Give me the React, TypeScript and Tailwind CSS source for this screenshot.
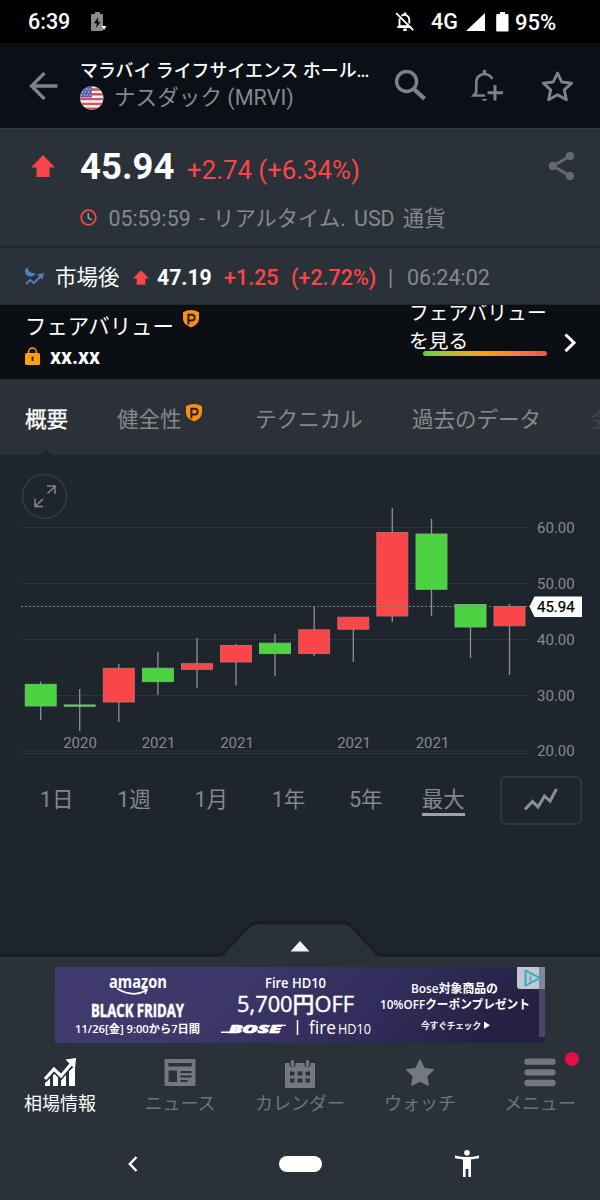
import type { ReactNode } from "react";
import { clsx } from "clsx";

type Candle = {
  x: number;
  open: number;
  close: number;
  high: number;
  low: number;
  up?: boolean;
};

// y values are pixels inside the chart, top to bottom
const candles: Candle[] = [
  { x: 40.7, open: 229.3, close: 251, high: 226.5, low: 265, up: true },
  { x: 79.7, open: 249.9, close: 251.3, high: 234, low: 276, up: true },
  { x: 118.8, open: 213.3, close: 247, high: 209, low: 267 },
  { x: 157.9, open: 213.2, close: 226.7, high: 197, low: 240, up: true },
  { x: 197, open: 208.7, close: 214.3, high: 183, low: 233 },
  { x: 236, open: 190.5, close: 207, high: 189, low: 230.5 },
  { x: 275, open: 188.2, close: 198.6, high: 179, low: 221, up: true },
  { x: 314.2, open: 174.8, close: 198.5, high: 152, low: 201 },
  { x: 353.3, open: 162.2, close: 174.2, high: 162, low: 207 },
  { x: 392.3, open: 77.5, close: 161, high: 53, low: 167 },
  { x: 431.5, open: 79, close: 134.3, high: 64, low: 161, up: true },
  { x: 470.5, open: 149.5, close: 172, high: 149, low: 203, up: true },
  { x: 509.5, open: 151.5, close: 170.8, high: 149, low: 220 },
];

const priceLines = [
  { y: 72.5, label: "60.00" },
  { y: 128.5, label: "50.00" },
  { y: 184.5, label: "40.00" },
  { y: 240.5, label: "30.00" },
  { y: 296, label: "20.00" },
];

const years = [
  { x: 80, label: "2020" },
  { x: 158.5, label: "2021" },
  { x: 237, label: "2021" },
  { x: 354, label: "2021" },
  { x: 432.5, label: "2021" },
];

const ranges = ["1日", "1週", "1月", "1年", "5年", "最大"];

function UpArrow({ className }: { className?: string }) {
  return (
    <svg viewBox="0 0 24 22" className={className} fill="#fa4648">
      <path d="M12 0 24 12.5H18.5V22H5.5V12.5H0Z" />
    </svg>
  );
}

function ProBadge({ className }: { className?: string }) {
  return (
    <svg viewBox="0 0 16 18" className={className}>
      <path d="M0 2.2Q8-2.2 16 2.2V9Q15.5 14.5 8 17.5L4.5 15.6Q.5 13.500 0 9Z" fill="#ff8f0c" />
      <path d="M5.4 14.500V4.7H8.8a2.9 2.9 0 0 1 0 5.800H5.4" fill="none" stroke="#1f252c" strokeWidth="2" />
    </svg>
  );
}

function StatusBar() {
  return (
    <div className="flex h-[43px] items-center bg-black pl-7 text-[21.5px] font-medium text-white">
      <span className="w-[63px] pt-0.5">6:39</span>
      <svg width="16" height="20" viewBox="0 0 16 20">
        <path d="M4 2V0h5v2h2a1 1 0 0 1 1 1v15a1 1 0 0 1-1 1H1a1 1 0 0 1-1-1V3a1 1 0 0 1 1-1Z" fill="#8b8b8b" />
        <path d="M7.2 5 3 11.3h2.8L5.2 16l4.3-6.3H6.6Z" fill="#000" />
        <path d="M10.5 14h5L13 18Z" fill="#fff" />
      </svg>
      <svg width="20" height="20" viewBox="0 0 20 20" className="ml-[288px]" fill="none" stroke="#fff" strokeWidth="1.9">
        <path d="M4.5 6.5v7.7h10M2.3 15h14M6.5 3.7A5 5 0 0 1 14.3 8v3.5M1.2 1.2l17 17" />
        <path d="M10 .5v2.6M8.3 17.8h3.4" strokeWidth="2.4" />
      </svg>
      <span className="ml-4 w-[35px] pt-0.5">4G</span>
      <svg width="19" height="18" viewBox="0 0 19 18" fill="#fff">
        <path d="M0 18 19 0V18Z" />
      </svg>
      <svg width="13" height="20" viewBox="0 0 13 20" className="ml-[11px]" fill="#fff">
        <path d="M4 2V0h5v2h2.500a1 1 0 0 1 1 1v15.500a1 1 0 0 1-1 1H1.200a1 1 0 0 1-1-1V3a1 1 0 0 1 1-1Z" />
      </svg>
      <span className="ml-1.5 pt-0.5 text-[22px]">95%</span>
    </div>
  );
}

function Flag() {
  return (
    <svg width="24" height="24" viewBox="0 0 24 24" className="-mr-px">
      <defs>
        <clipPath id="flag">
          <circle cx="11.700" cy="12" r="11.700" />
        </clipPath>
      </defs>
      <g clipPath="url(#flag)">
        <path d="M0 0h24v24H0Z" fill="#f4f1f3" />
        <path d="M0 3.500h24M0 8.300h24M0 13.100h24M0 17.900h24M0 22.700h24" stroke="#d5505f" strokeWidth="2.400" />
        <path d="M0 0h12v11.500H0Z" fill="#5a61a8" />
        <path d="M3 3h9M2 6h10M1 9h11" stroke="#d7d9ef" strokeWidth="1.200" strokeDasharray="1.300 1.700" />
      </g>
    </svg>
  );
}

function Header() {
  return (
    <header className="flex h-[85px] bg-[#0b0f16] pl-[29px]">
      <svg width="29" height="28" viewBox="0 0 29 28" className="mt-[29px] shrink-0" fill="none" stroke="#7d8188" strokeWidth="3.400">
        <path d="M28.500 14H3M15.500 1 2.500 14l13 13" />
      </svg>
      <div className="ml-[22px] w-[300px] shrink-0 whitespace-nowrap">
        <h1 className="mt-[15px] h-[25px] text-[17.900px] leading-[25px] font-medium text-white">
          マラバイ ライフサイエンス ホール<span className="tracking-[-1px]">...</span>
        </h1>
        <div className="flex items-center gap-2.5 text-[21.600px] leading-[30px] text-[#85888c]">
          <Flag />
          <span className="ml-px">ナスダック (MRVI)</span>
        </div>
      </div>
      <svg width="32" height="32" viewBox="0 0 32 32" className="mt-[26px] ml-[14px] shrink-0" fill="none" stroke="#7d8188">
        <circle cx="12.600" cy="12.500" r="10" strokeWidth="3.400" />
        <path d="M19.500 19.500 22 22" strokeWidth="3" />
        <path d="m21 21 9.500 8.800" strokeWidth="4.400" />
      </svg>
      <svg width="32" height="32" viewBox="0 0 32 32" className="mt-[27px] ml-[45px] shrink-0" fill="none" stroke="#7d8188" strokeWidth="2.600">
        <path d="M14 25.500H2.500L5.300 22.200V13Q5.300 4.500 13.500 4Q19 4.200 21.300 9" />
        <path d="M13.500 0v4" strokeWidth="3.400" />
        <path d="M10.500 29h6Q13.500 33 10.500 29Z" fill="#7d8188" stroke="none" />
        <path d="M24 15v15.500M16.500 22.800H32" strokeWidth="3" />
      </svg>
      <svg width="34" height="34" viewBox="0 0 34 34" className="mt-[26px] ml-[37px] shrink-0" fill="none" stroke="#7d8188" strokeWidth="2.900">
        <path d="m17.500 4 4.200 9 10 1.100-7.400 6.800 2.100 9.800-8.900-4.900-8.900 4.900 2.100-9.800-7.400-6.800 10-1.100Z" strokeLinejoin="round" />
      </svg>
    </header>
  );
}

function Quote() {
  return (
    <section className="h-[120px] border-t border-b-2 border-t-[#363a42] border-b-[#22282e] bg-[#2b3138]">
      <div className="flex h-[66px] items-center pl-[31px]">
        <UpArrow className="mt-2 h-[22px] w-6" />
        <span className="ml-[25px] w-[107px] pt-2.5 text-[36.500px] leading-none font-bold text-white">45.94</span>
        <span className="pt-[18px] text-[25.800px] leading-none whitespace-nowrap text-[#fa4648]">+2.74 (+6.34%)</span>
        <svg width="27" height="30" viewBox="0 0 27 30" className="mt-[7px] ml-auto mr-[25px]" fill="#656a71" stroke="#656a71">
          <path d="M22 5 5 15 22 25" fill="none" strokeWidth="2.800" />
          <circle cx="22" cy="5" r="3.800" />
          <circle cx="4.800" cy="15" r="3.800" />
          <circle cx="22" cy="25" r="3.800" />
        </svg>
      </div>
      <div className="flex h-[46px] items-center pl-[79.500px] text-[21.300px] whitespace-nowrap text-[#85888c]">
        <svg width="17" height="17" viewBox="0 0 17 17" fill="none" className="-mt-0.5">
          <circle cx="8.500" cy="8.500" r="7.300" stroke="#ef4a50" strokeWidth="1.700" />
          <path d="M8.300 4v5l3.500 1.800" stroke="#a09ca1" strokeWidth="1.500" />
        </svg>
        <span className="ml-3 pt-px [word-spacing:3px]">05:59:59 - リアルタイム. USD 通貨</span>
      </div>
    </section>
  );
}

function AfterHours() {
  return (
    <section className="flex h-[57px] items-center border-b border-[#20262b] bg-[#2b3138] pt-1 pl-6 text-[21.500px] whitespace-nowrap">
      <svg width="21" height="19" viewBox="0 0 21 19" fill="none" stroke="#4f81c2" className="-mt-1">
        <path d="M3.500 0Q4 7 11.500 6Q10 10 5.500 9.500Q.5 8 1 3Z" fill="#4f81c2" stroke="none" />
        <path d="m2 17 4-4 4 3 8-8" strokeWidth="2" />
        <path d="M13 7.500 20 6l-1.500 6.500Z" fill="#4f81c2" stroke="none" />
      </svg>
      <span className="ml-2.5 w-[78px] text-white">市場後</span>
      <UpArrow className="-mt-0.5 h-[15px] w-4" />
      <span className="ml-2 w-[67px] text-[21.200px] font-bold text-white">47.19</span>
      <span className="w-[67px] font-medium text-[#fa4648]">+1.25</span>
      <span className="w-[97px] font-medium text-[#fa4648]">(+2.72%)</span>
      <span className="w-[19px] text-[#85888c]">|</span>
      <span className="text-[#85888c]">06:24:02</span>
    </section>
  );
}

function FairValue() {
  return (
    <section className="flex h-[74px] overflow-hidden bg-[#0b0f13] text-white">
      <div className="w-[409px] shrink-0 pl-[25px] whitespace-nowrap">
        <div className="flex h-9">
          <span className="pt-[7px] text-[21.400px] leading-[30px]">フェアバリュー</span>
          <ProBadge className="mt-[5px] ml-[9px] h-[18px] w-4" />
        </div>
        <div className="-mt-0.5 flex items-center">
          <svg width="15" height="18" viewBox="0 0 15 18">
            <path d="M3.600 7V5a3.900 3.900 0 0 1 7.800 0v2" fill="none" stroke="#ffa00c" strokeWidth="1.500" />
            <rect y="6" width="15" height="12" rx="1.500" fill="#ffa00c" />
            <path d="M7.500 9.500V14" stroke="#33270b" strokeWidth="2" />
          </svg>
          <span className="ml-2.5 pt-[3px] text-[21.500px] leading-[30px] font-bold">xx.xx</span>
        </div>
      </div>
      <div className="w-[152px] shrink-0">
        <p className="-mt-[5px] h-[51px] w-[142px] text-[19.800px] leading-7">フェアバリューを見る</p>
        <div className="relative ml-3.5 h-[5px] w-[124px] rounded-full bg-linear-to-r from-[#4bd440] via-[#ffa00c] to-[#f4504a]" />
      </div>
      <svg width="13" height="20" viewBox="0 0 13 20" className="mt-7 ml-[3px]" fill="none" stroke="#fff" strokeWidth="3">
        <path d="m1.500 1.500 8.500 8.300-8.500 8.300" />
      </svg>
    </section>
  );
}

function Tabs() {
  return (
    <nav className="flex h-[76px] items-center overflow-hidden bg-[#2c3138] pl-[25px] text-[21.500px] whitespace-nowrap text-[#85888c]">
      <div className="relative flex h-full w-[92px] shrink-0 items-center pt-[7px] text-white [-webkit-text-stroke:0.3px_#fff]">
        概要
        <div className="absolute bottom-0 left-[15px] h-1.5 w-3 bg-[#1f252c] [clip-path:polygon(50%_0,100%_100%,0_100%)]" />
      </div>
      <div className="flex w-[138px] shrink-0 items-start pt-[7px]">
        健全性
        <ProBadge className="ml-1 h-[18px] w-4" />
      </div>
      <span className="w-[157px] shrink-0 pt-[7px]">テクニカル</span>
      <span className="w-[179px] shrink-0 pt-[7px]">過去のデータ</span>
      <span className="pt-[7px] text-[#41464d]">会</span>
    </nav>
  );
}

function Chart() {
  return (
    <svg width="600" height="305" viewBox="0 0 600 305" className="block" fontSize="15">
      <g fill="none" stroke="#353b42" strokeWidth="1.500">
        <circle cx="44.500" cy="41.500" r="22" />
        <path d="m47.500 38.500 7.500-7M47 31h8v8M43 44l-7.500 7M35 43.500v8h8" stroke="#85888c" />
      </g>
      {priceLines.map((line) => (
        <g key={line.label}>
          <path d={`M21 ${line.y}H530`} stroke="#2e343b" strokeWidth="1.200" />
          <text x="537" y={line.y + 5} fill="#85888c">
            {line.label}
          </text>
        </g>
      ))}
      <path d="M21 298.500H530" stroke="#2e343b" />
      {candles.map((c) => (
        <g key={c.x} stroke="#8b9195">
          <path d={`M${c.x} ${c.high}V${c.low}`} strokeWidth="1.300" />
          <rect
            x={c.x - 15.5}
            y={c.open}
            width="31"
            height={c.close - c.open}
            fill={c.up ? "#4bd440" : "#fa4648"}
            stroke={c.up ? "#6fbf70" : "#d0696c"}
            strokeWidth="0.900"
          />
        </g>
      ))}
      <path d="M21 151.500H530" stroke="#85888c" strokeDasharray="2 2" strokeWidth="0.900" />
      {years.map((year) => (
        <text key={year.x} x={year.x} y="293" textAnchor="middle" fill="#85888c">
          {year.label}
        </text>
      ))}
      <path d="m529.500 151.500 5-10H582v20.500h-47.500Z" fill="#fff" />
      <text x="537" y="157" fill="#000" stroke="#000" strokeWidth="0.250">
        45.94
      </text>
    </svg>
  );
}

function RangePicker() {
  return (
    <div className="flex h-[66px] items-center pl-[18px] text-[21.500px] text-[#85888c]">
      {ranges.map((range) => (
        <div key={range} className="flex w-[77.300px] justify-center pb-0.5">
          <span
            className={clsx(
              "flex h-[34px] items-center border-b-[3px] pt-1.5",
              range === "最大" ? "border-[#a0a2a5]" : "border-transparent",
            )}
          >
            {range}
          </span>
        </div>
      ))}
      <button className="ml-[18px] flex h-[49px] w-[82px] items-center justify-center rounded-md border-2 border-[#2f353c]">
        <svg width="34" height="24" viewBox="0 0 34 24" fill="none" stroke="#8c8f93" strokeWidth="3">
          <path d="m1 21.500 7.500-8 5.500 5.500 6.500-11 5.500 5 6.500-12" />
        </svg>
      </button>
    </div>
  );
}

function AdBanner() {
  return (
    <svg width="490" height="76" viewBox="0 0 490 76" className="mx-auto block" fill="#fff" fontFamily="'Open Sans','Noto Sans CJK JP',sans-serif">
      <defs>
        <linearGradient id="ad" x2="1" y2="0.150">
          <stop stopColor="#413a6e" />
          <stop offset="0.400" stopColor="#3d376a" />
          <stop offset="0.750" stopColor="#302b58" />
          <stop offset="1" stopColor="#252143" />
        </linearGradient>
      </defs>
      <rect width="490" height="76" fill="url(#ad)" />
      <text x="54" y="21" fontSize="18" fontWeight="700" textLength="58" lengthAdjust="spacingAndGlyphs">amazon</text>
      <path d="M62 21.500Q78 31 91 23.500M86.500 21.500l5.500 1-2 4.500" fill="none" stroke="#fff" strokeWidth="1.700" />
      <text x="36" y="50.300" fontSize="18" fontWeight="700" stroke="#fff" strokeWidth="0.500" textLength="93" lengthAdjust="spacingAndGlyphs">BLACK FRIDAY</text>
      <text x="20" y="66" fontSize="11" fontWeight="600" textLength="125" lengthAdjust="spacingAndGlyphs">11/26[金] 9:00から7日間</text>
      <text x="210" y="21" fontSize="13.500" fontWeight="600" textLength="61" lengthAdjust="spacingAndGlyphs">Fire HD10</text>
      <text x="182" y="44.500" fontSize="21.500" fontWeight="500" stroke="#fff" strokeWidth="0.400" textLength="117" lengthAdjust="spacingAndGlyphs">5,700円OFF</text>
      <text x="174" y="65.500" fontSize="10.500" fontWeight="800" fontStyle="italic" stroke="#fff" strokeWidth="0.700" textLength="52" lengthAdjust="spacingAndGlyphs">BOSE</text>
      <path d="M166 65.300h12M222 58.400h9" stroke="#fff" strokeWidth="1.400" />
      <path d="M242.500 53v15" stroke="#fff" strokeWidth="1.500" />
      <text x="254" y="67" fontSize="18" fontWeight="500" textLength="27" lengthAdjust="spacingAndGlyphs">fire</text>
      <text x="283" y="67" fontSize="14" fontWeight="500" textLength="33" lengthAdjust="spacingAndGlyphs">HD10</text>
      <text x="356" y="26" fontSize="12.500" fontWeight="600" textLength="87" lengthAdjust="spacingAndGlyphs">Bose対象商品の</text>
      <text x="325" y="42" fontSize="12.500" fontWeight="600" textLength="150" lengthAdjust="spacingAndGlyphs">10%OFFクーポンプレゼント</text>
      <text x="366" y="61.500" fontSize="9.500" fontWeight="500" stroke="#fff" strokeWidth="0.200" textLength="60" lengthAdjust="spacingAndGlyphs">今すぐチェック</text>
      <path d="m429 54.500 6 3.700-6 3.700Z" />
      <path d="M484 22h6v48h-6Z" fill="#4a4665" />
      <path d="M462 0h28v22h-25q-3 0-3-3Z" fill="#c4c4d4" />
      <path d="M484 0h6v22h-6Z" fill="#85859a" />
      <path d="M470.500 3.500v15L485 11Z" fill="none" stroke="#22aebd" strokeWidth="1.800" strokeLinejoin="round" />
      <path d="M475.500 9.500v5M475.500 6.800v1.500" stroke="#22aebd" strokeWidth="1.500" />
    </svg>
  );
}

function NavItem({ label, active, children }: { label: string; active?: boolean; children: ReactNode }) {
  return (
    <div
      className={clsx(
        "relative flex w-[120px] flex-col items-center text-[18px] leading-[26px] whitespace-nowrap",
        active ? "text-white" : "text-[#6f747b]",
      )}
    >
      <svg width="34" height="31" viewBox="0 0 34 31" fill={active ? "#fff" : "#747981"}>
        {children}
      </svg>
      <span className="mt-[3px]">{label}</span>
    </div>
  );
}

function BottomNav() {
  return (
    <nav className="mt-[14px] flex h-[66px]">
      <NavItem label="相場情報" active>
        <path d="m2 29v-3l5-5v8ZM10 29V18l2-1 3 3v9ZM18 29v-8l5-4v12ZM26 29V14l6-5v20Z" />
        <path d="m2 22 9-10 7 7L29 6" fill="none" stroke="#2b3138" strokeWidth="6" />
        <path d="m2 22 9-10 7 7L29 6" fill="none" stroke="#fff" strokeWidth="3.200" />
        <path d="M22.500 2.500 33 1 32 12Z" />
      </NavItem>
      <NavItem label="ニュース">
        <rect x="1.500" y="2" width="31" height="27" rx="1" />
        <path d="M5.500 7.700h23M17.500 15h11M17.500 19.500h11M17.500 24h7" stroke="#2b3138" strokeWidth="2" />
        <path d="M5.500 6h23v3.500h-23ZM5.500 13.500h8.500v11.500H5.500Z" fill="#2b3138" />
      </NavItem>
      <NavItem label="カレンダー">
        <path d="M2 6h30v23.500q0 1.500-1.500 1.500h-27Q2 31 2 29.500Z" />
        <g stroke="#2b3138" strokeWidth="6">
          <path d="M9.500 3v4.500M24.500 3v4.500" strokeLinecap="round" />
        </g>
        <g stroke="#747981" strokeWidth="3" strokeLinecap="round">
          <path d="M9.500 4.500v4M24.500 4.500v4" />
        </g>
        <path d="M7 14.500h4.500v4H7ZM14.500 14.500h5v4h-5ZM22.500 14.500H27v4h-4.500ZM7 21.500h4.500v4H7ZM14.500 21.500h5v4h-5ZM22.500 21.500H27v4h-4.500Z" fill="#2b3138" />
      </NavItem>
      <NavItem label="ウォッチ">
        <path d="m17 3 4.100 8.500 9 1.300-6.600 6.400 1.600 9-8.100-4.300-8.100 4.300 1.600-9-6.600-6.400 9-1.300Z" stroke="#747981" strokeWidth="1.500" strokeLinejoin="round" />
      </NavItem>
      <NavItem label="メニュー">
        <path d="M4.500 4.700h25M4.500 15.300h25M4.500 26h25" stroke="#747981" strokeWidth="6.300" strokeLinecap="round" />
      </NavItem>
    </nav>
  );
}

export default function App() {
  return (
    <main className="flex h-[1200px] w-[600px] flex-col overflow-hidden bg-[#1f252c] font-[Roboto,'Noto_Sans_CJK_JP',sans-serif]">
      <StatusBar />
      <Header />
      <Quote />
      <AfterHours />
      <FairValue />
      <Tabs />
      <Chart />
      <div className="pt-[7px]">
        <RangePicker />
      </div>
      <div className="mt-auto">
        <svg width="600" height="42" viewBox="0 0 600 42" className="block">
          <defs>
            <filter id="lift" x="-5%" y="-30%" width="110%" height="160%">
              <feDropShadow dx="0" dy="-1" stdDeviation="2.500" floodColor="#10141a" floodOpacity="0.700" />
            </filter>
          </defs>
          <path
            d="M-20 41H218q4 0 7-3L247 14q5-5.500 12-5.500h83q6 0 11 5.500l22 24q3 3 7 3h238V60H-20Z"
            fill="#2b3138"
            filter="url(#lift)"
          />
          <path d="m300 25 9.500 10.500h-19Z" fill="#f2f2f3" />
        </svg>
        <footer className="relative h-[242px] bg-[#2b3138] pt-[9px]">
          <AdBanner />
          <BottomNav />
          <div className="absolute top-[94px] right-[21.500px] size-3.5 rounded-full bg-[#e60f45]" />
          <div className="flex h-[62px] items-center pt-[19px]">
            <svg width="10" height="16" viewBox="0 0 10 16" className="ml-32" fill="none" stroke="#fff" strokeWidth="2.400">
              <path d="M8.500 1 1.800 8l6.700 7" />
            </svg>
            <div className="ml-[141px] h-4 w-[43px] rounded-full bg-white" />
            <svg width="24" height="27" viewBox="0 0 24 27" className="ml-[133px]" fill="#fff">
              <circle cx="12" cy="2.800" r="2.800" />
              <path d="M0 5.500Q12 8.500 24 5.500v2.700l-8 1.300V27h-2.600v-8h-2.800v8H8V9.500L0 8.200Z" />
            </svg>
          </div>
        </footer>
      </div>
    </main>
  );
}
